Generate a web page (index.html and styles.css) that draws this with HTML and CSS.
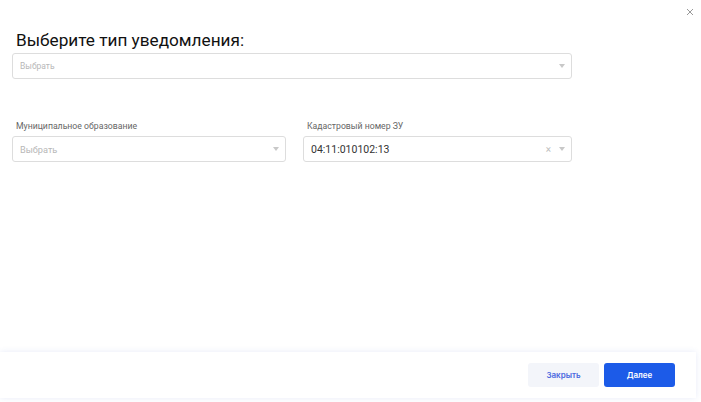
FILE: index.html
```html
<!DOCTYPE html>
<html>
<head>
    <title>Уведомление</title>
    <link rel="stylesheet" href="styles.css">
</head>
<body>
    <div class="modal">
        <button class="close" aria-label="Закрыть">
            <svg width="8" height="8" viewBox="0 0 8 8"><path d="M1 1L7 7M7 1L1 7" stroke="#999" stroke-width="1"/></svg>
        </button>
        <div class="content">
            <h2 class="title">Выберите тип уведомления:</h2>
            <div class="select wide">
                <span class="placeholder">Выбрать</span>
                <span class="arrow"></span>
            </div>
            <div class="row">
                <div class="field">
                    <label>Муниципальное образование</label>
                    <div class="select">
                        <span class="placeholder big">Выбрать</span>
                        <span class="arrow"></span>
                    </div>
                </div>
                <div class="field">
                    <label>Кадастровый номер ЗУ</label>
                    <div class="select">
                        <span class="value">04:11:010102:13</span>
                        <span class="clear">×</span>
                        <span class="arrow"></span>
                    </div>
                </div>
            </div>
        </div>
        <div class="footer">
            <button class="btn btn-light">Закрыть</button>
            <button class="btn btn-primary">Далее</button>
        </div>
    </div>
</body>
</html>
```
FILE: styles.css
```css
body {
    margin: 0;
    background-color: #fff;
    font-family: Roboto, "Liberation Sans", sans-serif;
}
.modal {
    position: relative;
    height: 100vh;
    display: flex;
    flex-direction: column;
}
.close {
    position: absolute;
    top: 8px;
    right: 7px;
    border: none;
    background: none;
    padding: 0;
    width: 8px;
    height: 8px;
    cursor: pointer;
}
.close svg {
    display: block;
}
.content {
    padding: 30px 0 0 12px;
    width: 560px;
}
.title {
    margin: 0 0 3px 4px;
    font-size: 17.2px;
    font-weight: 400;
    color: #111;
    line-height: 20px;
}
.select {
    display: flex;
    align-items: center;
    height: 24px;
    border: 1px solid #ddd;
    border-radius: 3px;
    padding: 0 6px 0 7px;
    gap: 8px;
}
.placeholder {
    flex: 1;
    font-size: 8.5px;
    color: #b8b8b8;
}
.placeholder.big {
    font-size: 9.2px;
}
.value {
    flex: 1;
    font-size: 10.5px;
    color: #333;
}
.clear {
    font-size: 10px;
    color: #c0c0c0;
}
.arrow {
    width: 0;
    height: 0;
    border-left: 3.5px solid transparent;
    border-right: 3.5px solid transparent;
    border-top: 4px solid #c8c8c8;
}
.row {
    display: grid;
    grid-template-columns: 274px 269px;
    gap: 17px;
    margin-top: 42px;
}
.field label {
    display: block;
    font-size: 8.7px;
    color: #666;
    margin: 0 0 5px 4px;
}
.footer {
    margin-top: auto;
    margin-bottom: 4px;
    width: 696px;
    height: 46px;
    display: flex;
    justify-content: flex-end;
    align-items: center;
    gap: 5px;
    box-sizing: border-box;
    padding-right: 21px;
    background-color: #fff;
    box-shadow: 0 0 6px rgba(60, 90, 200, 0.12);
}
.btn {
    width: 71px;
    height: 24px;
    border: none;
    border-radius: 3px;
    font-family: Inter, Roboto, sans-serif;
    font-size: 8px;
    font-weight: 600;
    cursor: pointer;
}
.btn-light {
    background-color: #f3f5fa;
    color: #4a6ae0;
}
.btn-primary {
    background-color: #1c5be8;
    color: #fff;
}
```
